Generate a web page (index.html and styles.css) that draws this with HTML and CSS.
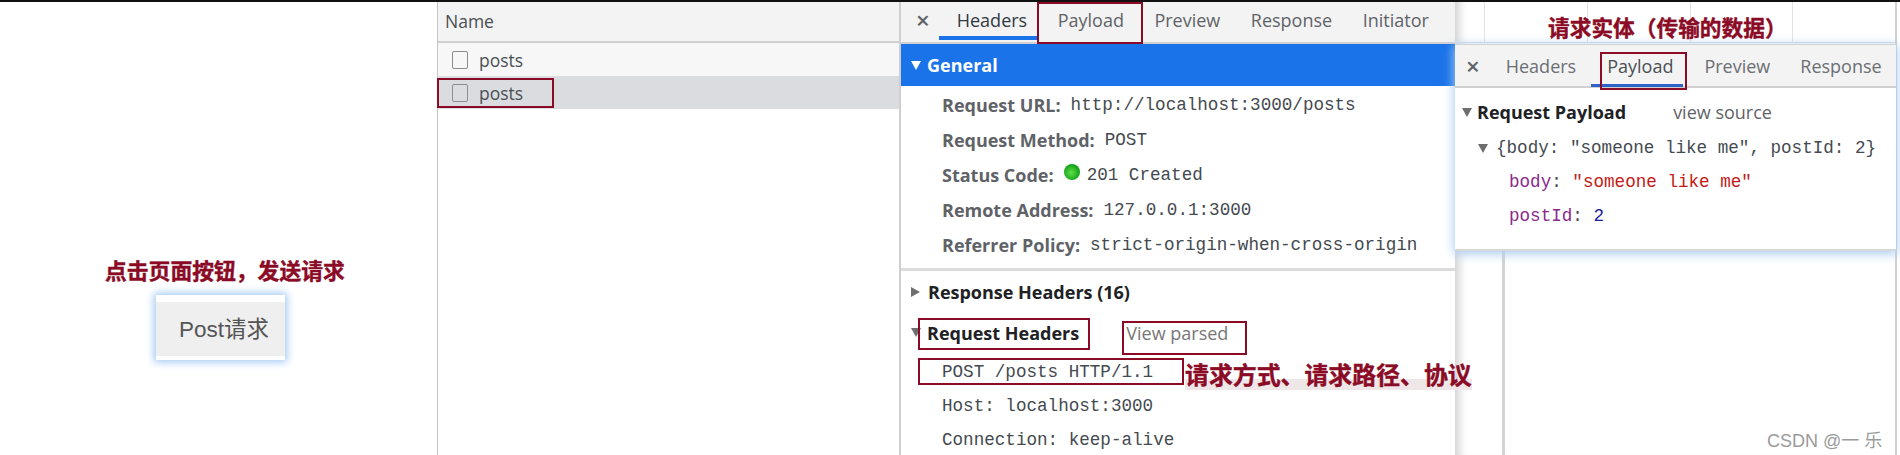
FILE: index.html
```html
<!DOCTYPE html>
<html lang="zh-CN">
<head>
<meta charset="utf-8">
<title>Post请求</title>
<link rel="stylesheet" href="styles.css">
</head>
<body>
<main class="page">
  <section class="demo">
    <p class="note demo-note">点击页面按钮，发送请求</p>
    <button class="post-btn" type="button">Post请求</button>
  </section>

  <section class="names">
    <div class="names-head">Name</div>
    <div class="name-row"><span class="check"></span>posts</div>
    <div class="name-row selected"><span class="check"></span>posts</div>
  </section>

  <section class="detail">
    <nav class="tabs">
      <span class="close">×</span>
      <span class="tab tab-active">Headers</span>
      <span class="tab">Payload</span>
      <span class="tab">Preview</span>
      <span class="tab">Response</span>
      <span class="tab">Initiator</span>
    </nav>
    <div class="general"><i class="tri tri-white"></i>General</div>
    <div class="rows">
      <div class="kv"><b>Request URL:</b><code>http://localhost:3000/posts</code></div>
      <div class="kv"><b>Request Method:</b><code>POST</code></div>
      <div class="kv"><b>Status Code:</b><i class="dot"></i><code class="after-dot">201 Created</code></div>
      <div class="kv"><b>Remote Address:</b><code>127.0.0.1:3000</code></div>
      <div class="kv"><b>Referrer Policy:</b><code>strict-origin-when-cross-origin</code></div>
    </div>
    <div class="section-title first"><i class="tri tri-right"></i>Response Headers (16)</div>
    <div class="section-title"><i class="tri"></i>Request Headers<span class="parsed">View parsed</span></div>
    <div class="raw">
      <code>POST /posts HTTP/1.1</code>
      <code>Host: localhost:3000</code>
      <code>Connection: keep-alive</code>
    </div>
  </section>

  <section class="waterfall">
    <div class="grid-top"><span></span><span></span><span></span><span></span></div>
    <div class="grid-bottom"></div>
  </section>
  <div class="edge"></div>

  <section class="popup">
    <nav class="popup-tabs">
      <span class="close">×</span>
      <span class="ptab">Headers</span>
      <span class="ptab ptab-active">Payload</span>
      <span class="ptab">Preview</span>
      <span class="ptab">Response</span>
    </nav>
    <div class="popup-body">
      <div class="payload-title"><i class="tri"></i><b>Request Payload</b><span class="source">view source</span></div>
      <div class="json summary"><i class="tri"></i><code>{body: "someone like me", postId: 2}</code></div>
      <div class="json prop"><code><span class="key">body</span>: <span class="str">"someone like me"</span></code></div>
      <div class="json prop"><code><span class="key">postId</span>: <span class="num">2</span></code></div>
    </div>
  </section>

  <p class="note note-body">请求实体（传输的数据）</p>
  <p class="note note-line">请求方式、请求路径、协议</p>

  <div class="mark mark-name"></div>
  <div class="mark mark-payload"></div>
  <div class="mark mark-reqh"></div>
  <div class="mark mark-parsed"></div>
  <div class="mark mark-post"></div>
  <div class="mark mark-ptab"></div>

  <div class="watermark">CSDN @一 乐</div>
</main>
</body>
</html>
```
FILE: styles.css
```css
* { box-sizing: border-box; }
html, body { margin: 0; padding: 0; background: #fff; }
body { font-family: "Open Sans", "Noto Sans CJK SC", sans-serif; color: #303942; overflow: hidden; }
p { margin: 0; }
code { font-family: "Liberation Mono", monospace; font-size: 17.6px; color: #444a50; white-space: pre; }
i { display: inline-block; }

.page { position: relative; display: flex; width: 1900px; height: 455px; overflow: hidden; border-top: 2px solid #111; }

.note { font-family: "Liberation Sans", "Noto Sans CJK SC", sans-serif; font-weight: 700; color: #8b0a25; white-space: nowrap; -webkit-text-stroke: 0.4px #8b0a25; }

/* left demo */
.demo { width: 437px; flex: none; display: flex; flex-direction: column; align-items: flex-start; padding: 257px 0 0 105px; }
.demo-note { font-size: 21.8px; line-height: 26px; }
.post-btn { margin: 10px 0 0 51px; width: 129px; height: 65px; padding: 0 0 4px 23px; text-align: left; border: 0; border-top: 7px solid #fff; border-bottom: 4px solid #fff; border-radius: 0; background: #efefef; color: #555; font: 22.5px "Liberation Sans", "Noto Sans CJK SC", sans-serif; box-shadow: 0 0 8px 2px #a0c8f5; }

/* request names */
.names { width: 464px; flex: none; border-left: 1px solid #c4c4c4; border-right: 2px solid #cfcfcf; }
.names-head { height: 41px; padding-left: 7px; background: #f3f3f3; border-bottom: 2px solid #d0d0d0; font-size: 17.5px; line-height: 38px; color: #4a4f54; }
.name-row { display: flex; align-items: center; height: 33px; padding-left: 14px; background: #f7f7f7; font-size: 17.5px; color: #4a4f54; }
.name-row.selected { background: #dadce0; }
.check { width: 16px; height: 18px; margin-right: 11px; border: 1.5px solid #8d8d8d; border-radius: 2px; }

/* headers detail */
.detail { width: 554px; flex: none; }
.tabs { display: flex; align-items: center; height: 42px; padding-bottom: 4px; background: #f3f3f3; border-bottom: 2px solid #d0d0d0; font-size: 18px; color: #5f6368; position: relative; }
.close { font-size: 24px; line-height: 24px; font-weight: 600; color: #5f6368; }
.tabs .close { margin-left: 15px; }
.tab { margin-right: 30.5px; }
.tab-active { position: relative; margin-left: 27px; color: #303942; }
.tab-active::after { content: ""; position: absolute; left: -18px; right: -10px; bottom: -8px; height: 4px; background: #1a73e8; }
.general { display: flex; align-items: center; height: 42px; padding-left: 10px; background: #1a73e8; color: #fff; font-size: 18px; font-weight: 700; }
.tri { width: 0; height: 0; border-left: 5.5px solid transparent; border-right: 5.5px solid transparent; border-top: 9px solid #6e6e6e; margin-right: 5px; flex: none; }
.tri-white { border-top-color: #fff; }
.general .tri, .section-title .tri { margin-right: 6px; }
.tri-right { border: 0; border-top: 5.5px solid transparent; border-bottom: 5.5px solid transparent; border-left: 9px solid #6e6e6e; }
.section-title .tri-right { margin-right: 8px; }
.rows { padding: 1px 0 6px 41px; border-bottom: 3px solid #dcdcdc; }
.kv { display: flex; align-items: center; height: 35px; font-size: 18px; color: #5f6368; }
.kv b { margin-right: 10px; }
.dot { width: 16px; height: 16px; margin: -6px 7px 0 0; border-radius: 50%; background: radial-gradient(circle at 45% 55%, #5fe04a, #0a9a12 75%); }
.section-title { display: flex; align-items: center; height: 41px; padding-left: 10px; font-size: 18px; font-weight: 700; color: #202124; }
.parsed { margin-left: 47px; font-weight: 400; color: #777; }
.raw { display: flex; flex-direction: column; padding: 4px 0 0 41px; }
.raw code { height: 34px; line-height: 30px; }

/* waterfall behind the popup */
.waterfall { position: relative; width: 440px; flex: none; box-shadow: inset 12px 0 10px -8px #cfcfcf; }
.grid-top { display: flex; height: 41px; border-bottom: 1px solid #ddd; padding-left: 29px; }
.grid-top span { width: 124px; border-left: 1px solid #e3e3e3; }
.grid-bottom { position: absolute; top: 248px; bottom: 0; left: 47px; width: 3px; background: #d4d4d4; }
.edge { width: 2px; flex: none; background: #d0d0d0; }

/* payload popup */
.popup { position: absolute; left: 1455px; top: 42px; width: 441px; height: 207px; background: #fff; box-shadow: 0 2px 10px 1px #a9ccf4; border-bottom: 2px solid #d8d8d8; }
.popup-tabs { display: flex; align-items: center; height: 44px; background: #f3f3f3; border-top: 1px solid #d4d4d4; border-bottom: 2px solid #d0d0d0; font-size: 18px; color: #6b6f74; }
.popup-tabs .close { margin: 0 26px 0 11px; }
.ptab { margin-right: 30px; }
.ptab-active { position: relative; color: #4a4f54; margin: 0 31px 0 1px; }
.ptab-active::after { content: ""; position: absolute; left: -16px; right: -10px; bottom: -9px; height: 3px; background: #2f62c8; }
.popup-body { padding-top: 7px; }
.payload-title { display: flex; align-items: center; height: 34px; padding-left: 7px; font-size: 18px; color: #202124; }
.source { margin-left: 47px; color: #5f6368; }
.json { display: flex; align-items: center; height: 34px; }
.summary { margin-top: 2px; padding-left: 23px; }
.summary .tri { margin-right: 8px; }
.prop { padding-left: 54px; }
.key { color: #8a2a8a; }
.str { color: #c41a16; }
.num { color: #1c1c9c; }

/* annotations */
.note-body { position: absolute; left: 1548px; top: 14px; font-size: 21.7px; line-height: 26px; }
.note-line { position: absolute; left: 1185px; top: 360px; font-size: 23.9px; line-height: 28px; background: linear-gradient(#fff0 60%, #efe6e8 60%); }
.mark { position: absolute; border: 2px solid #8b0a25; }
.mark-name { left: 437px; top: 76px; width: 117px; height: 30px; }
.mark-payload { left: 1037px; top: 0; width: 106px; height: 42px; }
.mark-reqh { left: 918px; top: 316px; width: 172px; height: 32px; }
.mark-parsed { left: 1122px; top: 319px; width: 125px; height: 34px; }
.mark-post { left: 918px; top: 356px; width: 266px; height: 27px; }
.mark-ptab { left: 1600px; top: 50px; width: 87px; height: 38px; }

.watermark { position: absolute; left: 1767px; top: 424px; font: 18px "Liberation Sans", "Noto Sans CJK SC", sans-serif; color: #9a9a9a; white-space: nowrap; }
```
